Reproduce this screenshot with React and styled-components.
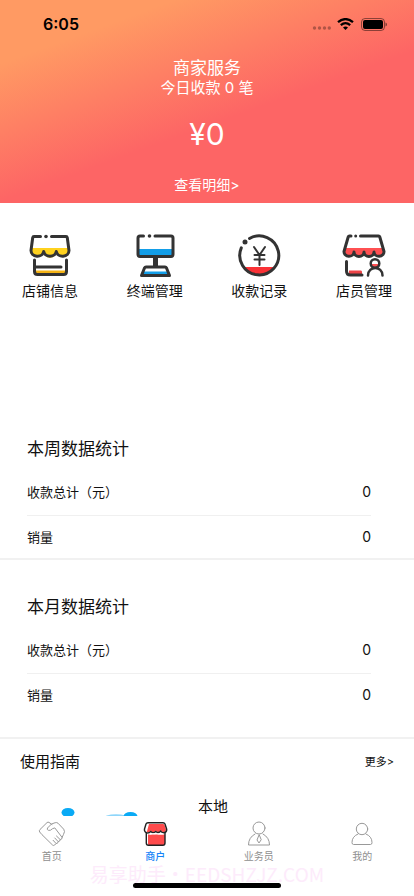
import React from "react";
import styled, { createGlobalStyle } from "styled-components";

const Global = createGlobalStyle`
  *, *::before, *::after { box-sizing: border-box; }
  body {
    margin: 0;
    background: #fff;
    color: #111;
    font-family: Inter, "Noto Sans CJK SC", sans-serif;
  }
  h1, h2, p, dl, dt, dd { margin: 0; font-weight: 400; }
  button { border: 0; padding: 0; background: none; font: inherit; color: inherit; cursor: pointer; }
  a { color: inherit; text-decoration: none; }
  svg { display: block; flex: none; }
`;

const Screen = styled.div`
  display: flex;
  flex-direction: column;
  height: 100vh;
  overflow: hidden;
`;

const Content = styled.main`
  flex: 1;
  min-height: 0;
  overflow-y: auto;
  scrollbar-width: none;
`;

const Hero = styled.header`
  color: #fff;
  text-align: center;
  padding-bottom: 8px;
  background: linear-gradient(160deg, #ff9a63 18%, #fd6565 57%);
`;

const StatusBar = styled.div`
  display: flex;
  justify-content: space-between;
  align-items: center;
  height: 48px;
  padding: 0 27px 0 43px;
  color: #000;
`;

const Clock = styled.time`
  font-size: 16px;
  font-weight: 600;
`;

const StatusIcons = styled.div`
  display: flex;
  align-items: center;
  gap: 6px;
`;

const HeroTitle = styled.h1`
  padding-top: 8px;
  font-size: 17px;
  line-height: 24px;
`;

const HeroNote = styled.p`
  font-size: 15px;
  line-height: 16px;
`;

const Amount = styled.p`
  padding: 20px 0;
  font-size: 30px;
  line-height: 36px;
`;

const DetailLink = styled.a`
  display: block;
  padding-top: 3px;
  font-size: 14px;
  line-height: 20px;
`;

const Shortcuts = styled.nav`
  display: flex;
  justify-content: space-between;
  height: 234px;
  padding: 31px 22px 0;
`;

const Shortcut = styled.button`
  display: flex;
  flex-direction: column;
  align-items: center;
  align-self: flex-start;
  width: 56px;
  gap: 3px;
  font-size: 14px;
  line-height: 20px;
  white-space: nowrap;
`;

const Stats = styled.section`
  padding: ${(p) => (p.$spaced ? "35px 43px 21px 27px" : "0 43px 0 27px")};
  border-bottom: 2px solid #f1f1f1;
`;

const StatsTitle = styled.h2`
  margin-bottom: 10px;
  font-size: 17px;
  line-height: 24px;
`;

const StatRow = styled.div`
  display: flex;
  justify-content: space-between;
  align-items: flex-start;
  height: 42px;
  padding-top: 11px;
  font-size: 13px;
  line-height: 20px;

  &:not(:last-child) {
    height: 45px;
    border-bottom: 1px solid #f0f0f0;
  }
`;

const StatValue = styled.dd`
  font-size: 14px;
`;

const GuideHead = styled.div`
  display: flex;
  justify-content: space-between;
  align-items: center;
  height: 43px;
  padding: 0 20px;
`;

const GuideTitle = styled.h2`
  font-size: 15px;
`;

const MoreLink = styled.a`
  font-size: 11px;
`;

const GuideItem = styled.article`
  display: flex;
  align-items: flex-start;
  gap: 48px;
  padding: 14px 20px 0 50px;
  font-size: 15px;
  line-height: 22px;
`;

const Footer = styled.footer`
  position: relative;
  height: 80px;
  background: #fff;
`;

const Tabs = styled.nav`
  display: grid;
  grid-template-columns: repeat(4, 1fr);
`;

const Tab = styled.button`
  display: flex;
  flex-direction: column;
  align-items: center;
  gap: 2px;
  padding-top: 4px;
  font-size: 10px;
  line-height: 12px;
  font-weight: ${(p) => (p.$active ? 500 : 400)};
  color: ${(p) => (p.$active ? "#1583f7" : "#8f8f8f")};
`;

const Watermark = styled.div`
  position: absolute;
  left: 0;
  right: 0;
  bottom: 12px;
  text-align: center;
  font-size: 19px;
  line-height: 20px;
  color: #fdebfb;
  white-space: nowrap;
  pointer-events: none;
  font-family: "Noto Sans CJK SC", sans-serif;
`;

const HomeIndicator = styled.div`
  position: absolute;
  left: 50%;
  bottom: 8px;
  width: 148px;
  height: 5px;
  border-radius: 3px;
  background: #000;
  transform: translateX(-50%);
`;

const Line = styled.svg.attrs({
  fill: "none",
  stroke: "#333",
  strokeWidth: 3,
  strokeLinecap: "round",
  strokeLinejoin: "round",
  width: 44,
  height: 44,
  viewBox: "0 0 44 44",
  "aria-hidden": true,
})``;

const Thin = styled.svg.attrs({
  fill: "none",
  stroke: "#999",
  strokeLinecap: "round",
  strokeLinejoin: "round",
  width: 28,
  height: 28,
  viewBox: "0 0 28 28",
  "aria-hidden": true,
})``;

const ShopIcon = () => (
  <Line>
    <path d="M3 14h38l1 4a6.7 5.8 0 0 1-13.3 0a6.7 5.8 0 0 1-13.4 0a6.7 5.8 0 0 1-13.3 0z" fill="#ffd21f" stroke="none" />
    <path d="M12.500 2.500H6Q4.900 2.500 4.700 3.700L3 16.500a6.400 5.800 0 0 0 12.700 1a6.400 5.800 0 0 0 12.600 0A6.400 5.800 0 0 0 41 16.500L39.300 3.700Q39.100 2.500 38 2.500H23.500" />
    <circle cx="18" cy="2.500" r="1.800" fill="#333" stroke="none" />
    <path d="M7 36.500h31v4.500H7z" fill="#f4b315" stroke="none" />
    <path d="M6.500 26V37.500q0 3 3 3h26q3 0 3-3V26M6.500 33H33" />
  </Line>
);

const TerminalIcon = () => (
  <Line>
    <path d="M5 15h34v7H5z" fill="#139ee8" stroke="none" />
    <path d="M10.500 2H7Q5 2 5 4v16q0 2.500 2 2.500h31q2 0 2-2.500V4q0-2-2-2H22" />
    <circle cx="16.500" cy="2" r="1.800" fill="#333" stroke="none" />
    <path d="M22.500 24v8" strokeWidth="5" strokeLinecap="butt" />
    <path d="M11 37.500h23l2 3.500h-27z" fill="#139ee8" stroke="none" />
    <path d="M13 33h19q1 0 1.500 1l3 7.500H8.500l3-7.500q.5-1 1.500-1z" />
  </Line>
);

const PaymentsIcon = () => (
  <Line>
    <path d="M6.500 33h31.500a19.500 19.500 0 0 1-31.500 0z" fill="#fa3236" stroke="none" />
    <path d="M12.500 4.500A19.500 19.500 0 1 1 4.300 13.800" />
    <circle cx="8" cy="8" r="2.500" fill="#333" stroke="none" />
    <path d="M17 13l5.500 8l5.500-8M22.500 21v10M17.500 21h10M17.500 25.500h10" strokeWidth="2" />
  </Line>
);

const StaffIcon = () => (
  <Line>
    <path d="M4 14h36l2 4a5 4.500 0 0 1-10 0a5 4.500 0 0 1-10 0a5 4.500 0 0 1-10 0a5 4.500 0 0 1-10 0z" fill="#ff5052" stroke="none" />
    <path d="M9 2H7.500Q6.500 2 6.200 3L2 17.500a5 4.500 0 0 0 10 .5a5 4.500 0 0 0 10 0a5 4.500 0 0 0 10 0a5 4.500 0 0 0 10-.5L37.800 3Q37.500 2 36.500 2H18.500" />
    <circle cx="13.700" cy="2" r="1.500" fill="#333" stroke="none" />
    <path d="M7 36.500h12q1 0 1 1.500v3H7z" fill="#ed4346" stroke="none" />
    <path d="M4.500 27.500V37q0 4 4 4H20" />
    <path d="M28.500 30h9a4.500 4.500 0 0 1-9 0z" fill="#ff5052" stroke="none" />
    <circle cx="33" cy="29.500" r="4.300" strokeWidth="2.500" />
    <path d="M26 41.500c0-10 14.500-10 14.500 0" strokeWidth="2.500" />
  </Line>
);

const HandshakeIcon = () => (
  <Thin>
    <path d="M14 4.500L11 2.400q-1-.7-2 .2L2 9.500q-1.200 1.200-.3 2.500L4 14.700L14.500 25q1.200 1 2.200 0l1.400-1.500q2 .2 2-1.900q2 0 2-2q2.100 0 2-2.200l1.400-3q1.900-3 .2-5.200L20 3.200q-1.200-1-2.800-.5L13.500 4L9.500 8q-.8 1.800.8 2.300q2 .8 4.200-1.600l2.300-.8l7.300 9.500M18.100 23.500l-3-3.200M20.100 21.500l-3.300-3.500M22.100 19.500L18.500 16" />
  </Thin>
);

const StoreTabIcon = () => (
  <Thin>
    <g stroke="#222" strokeWidth="1.400">
      <path d="M7 14.500h17v9q0 1.700-1.700 1.700H8.500Q7 25.200 7 23.700z" fill="#ff4b4c" stroke="none" />
      <path d="M8 4h14q1.200 0 1.600 1.200l1.400 4q.3 2.500-2 3q-2.500 0-3.300-1.700q-2 3-4.900.5q-2.800 2.500-5 0q-1.800 1.800-4 1z" fill="#ff4b4c" stroke="none" />
      <path d="M7 2.700h15q1.500 0 2 1.300l1.700 5.200q.3 2.800-2.600 3.500q-2.400.3-3.400-1.700q-2 2.800-4.900.5q-2.800 2.300-5 0q-2 2-4.500 1.200Q3 11.500 3.500 9L5 4Q5.500 2.700 7 2.700z" />
      <path d="M5.300 12.700V23q0 2.200 2.200 2.200h14.300Q24 25.200 24 23V13" />
      <path d="M9 14.200q2-.8 5-.5M17 14h5" stroke="#fff" strokeWidth="1" />
    </g>
  </Thin>
);

const AgentIcon = () => (
  <Thin>
    <circle cx="14" cy="8" r="6" />
    <path d="M10 14Q3.500 17.500 3.500 25h21q0-7.500-6.500-11M14 15l-2 5l2 3l2-3z" />
  </Thin>
);

const ProfileIcon = () => (
  <Thin>
    <circle cx="14" cy="9" r="5.700" />
    <path d="M10 14Q4 16.500 4 22.500q0 2 1.500 2h17q1.500 0 1.500-2q0-6-6-8.500" />
  </Thin>
);

const shortcuts = [
  { label: "店铺信息", Icon: ShopIcon },
  { label: "终端管理", Icon: TerminalIcon },
  { label: "收款记录", Icon: PaymentsIcon },
  { label: "店员管理", Icon: StaffIcon },
];

const tabs = [
  { label: "首页", Icon: HandshakeIcon },
  { label: "商户", Icon: StoreTabIcon, active: true },
  { label: "业务员", Icon: AgentIcon },
  { label: "我的", Icon: ProfileIcon },
];

const StatsBlock = ({ title, spaced }) => (
  <Stats $spaced={spaced}>
    <StatsTitle>{title}</StatsTitle>
    <dl>
      <StatRow>
        <dt>收款总计（元）</dt>
        <StatValue>0</StatValue>
      </StatRow>
      <StatRow>
        <dt>销量</dt>
        <StatValue>0</StatValue>
      </StatRow>
    </dl>
  </Stats>
);

export default function App() {
  return (
    <Screen>
      <Global />
      <Content>
        <Hero>
          <StatusBar>
            <Clock>6:05</Clock>
            <StatusIcons aria-hidden="true">
              <svg width="20" height="12" viewBox="0 0 20 12" fill="#000" opacity=".3">
                <circle cx="3.500" cy="10" r="1.700" />
                <circle cx="8.500" cy="10" r="1.700" />
                <circle cx="13.500" cy="10" r="1.700" />
                <circle cx="18.300" cy="10" r="1.700" />
              </svg>
              <svg width="17" height="12" viewBox="0 0 17 12" fill="none" stroke="#000" strokeWidth="2.300">
                <path d="M1 4.200q7.500-6.200 15 0M3.800 7.100q4.700-3.900 9.400 0" />
                <path d="M8.500 12L6 9.500q2.500-2 5 0z" fill="#000" stroke="none" />
              </svg>
              <svg width="27" height="13" viewBox="0 0 27 13">
                <rect x="1.500" y=".5" width="23" height="12" rx="3.500" fill="none" stroke="#000" opacity=".45" />
                <rect x="3" y="2" width="20" height="9" rx="2" />
                <path d="M25.500 4.500q1.500.5 1.500 2t-1.500 2z" opacity=".5" />
              </svg>
            </StatusIcons>
          </StatusBar>
          <HeroTitle>商家服务</HeroTitle>
          <HeroNote>今日收款 0 笔</HeroNote>
          <Amount>¥0</Amount>
          <DetailLink href="#details">查看明细&gt;</DetailLink>
        </Hero>

        <Shortcuts aria-label="商家服务">
          {shortcuts.map(({ label, Icon }) => (
            <Shortcut key={label} type="button">
              <Icon />
              {label}
            </Shortcut>
          ))}
        </Shortcuts>

        <StatsBlock title="本周数据统计" />
        <StatsBlock title="本月数据统计" spaced />

        <section>
          <GuideHead>
            <GuideTitle>使用指南</GuideTitle>
            <MoreLink href="#guides">更多&gt;</MoreLink>
          </GuideHead>
          <GuideItem>
            <svg width="100" height="60" viewBox="0 0 100 60" aria-hidden="true">
              <ellipse cx="18" cy="16.500" rx="6.500" ry="4.500" fill="#0aaaf5" />
              <ellipse cx="66" cy="23" rx="13" ry="4.800" fill="#8fd6fa" />
              <ellipse cx="80.500" cy="20.500" rx="7" ry="4.500" fill="#0aaaf5" />
            </svg>
            <p>本地</p>
          </GuideItem>
        </section>
      </Content>

      <Footer>
        <Tabs>
          {tabs.map(({ label, Icon, active }) => (
            <Tab key={label} type="button" $active={active} aria-current={active ? "page" : undefined}>
              <Icon />
              {label}
            </Tab>
          ))}
        </Tabs>
        <Watermark aria-hidden="true">易享助手・EEDSHZJZ.COM</Watermark>
        <HomeIndicator />
      </Footer>
    </Screen>
  );
}
